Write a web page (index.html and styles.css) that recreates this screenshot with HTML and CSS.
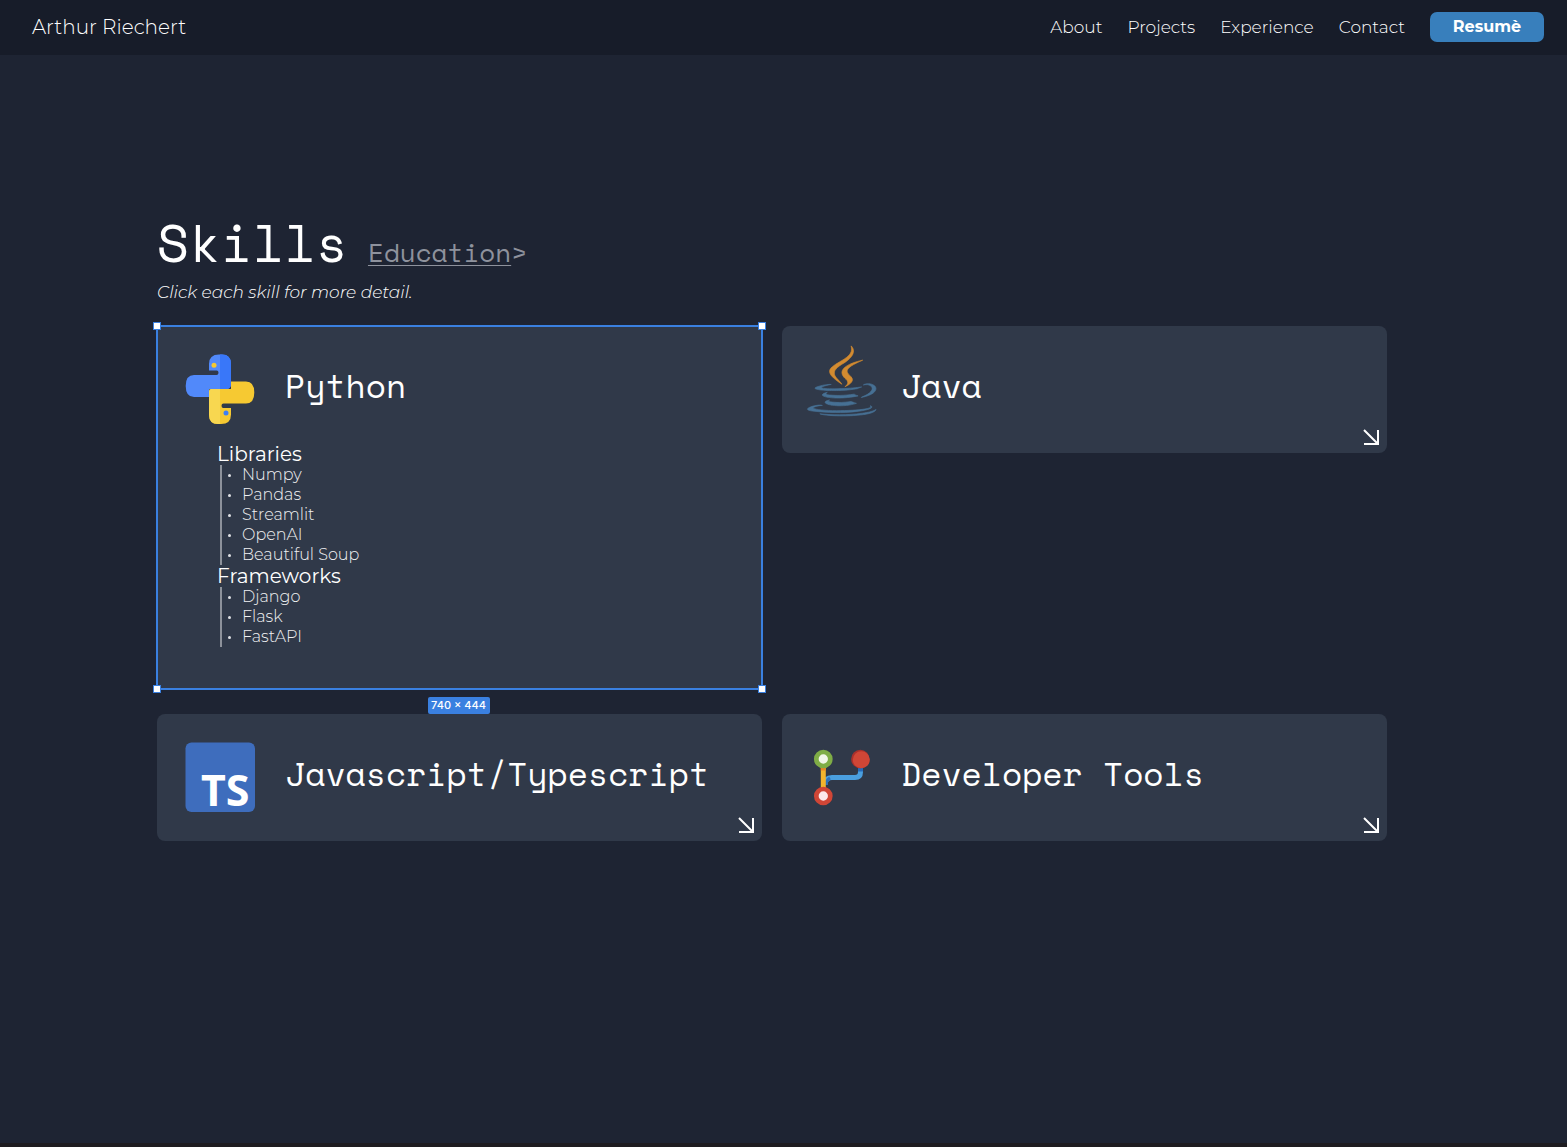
FILE: index.html
```html
<!DOCTYPE html>
<html lang="en">
<head>
<meta charset="utf-8">
<meta name="viewport" content="width=device-width, initial-scale=1">
<title>Arthur Riechert – Skills</title>
<link rel="stylesheet" href="styles.css">
</head>
<body>
<header class="site-header">
  <a class="brand" href="#">Arthur Riechert</a>
  <nav class="nav">
    <a href="#about">About</a>
    <a href="#projects">Projects</a>
    <a href="#experience">Experience</a>
    <a href="#contact">Contact</a>
    <button class="resume" type="button">Resumè</button>
  </nav>
</header>

<main class="page">
  <div class="heading">
    <h1>Skills</h1>
    <a class="switch" href="#education"><span>Education</span>&gt;</a>
  </div>
  <p class="hint">Click each skill for more detail.</p>

  <div class="skills">
    <section class="card card--open">
      <div class="card-head">
        <svg class="icon" viewBox="0 0 70 70" aria-hidden="true">
          <path fill="#5189fa" d="M24 10Q24 .5 34 .5H37Q46 .5 46 10V29.5Q46 35 41 35H24V43H9Q.7 43 .7 32Q.7 21 9 21H31.5Q33.5 21 33.5 18.7T31.5 16.5H24Z"/>
          <path fill="#3977f9" d="M35 .5H37Q46 .5 46 10V29.5Q46 35 41 35H35Z"/>
          <circle cx="29" cy="11.3" r="2.5" fill="#f5c831"/>
          <g transform="rotate(180 35 35.2)">
            <path fill="#f6c932" d="M24 10Q24 .5 34 .5H37Q46 .5 46 10V33Q46 35.4 43.5 35.4H24V43H9Q.7 43 .7 32Q.7 21 9 21H31.5Q33.5 21 33.5 18.7T31.5 16.5H24Z"/>
            <path fill="#f8d750" d="M35 .5H37Q46 .5 46 10V33Q46 35.4 43.5 35.4H35Z"/>
            <circle cx="29" cy="11.3" r="2.5" fill="#3f7ff5"/>
          </g>
        </svg>
        <h2>Python</h2>
      </div>
      <div class="details">
        <h3>Libraries</h3>
        <ul>
          <li>Numpy</li>
          <li>Pandas</li>
          <li>Streamlit</li>
          <li>OpenAI</li>
          <li>Beautiful Soup</li>
        </ul>
        <h3>Frameworks</h3>
        <ul>
          <li>Django</li>
          <li>Flask</li>
          <li>FastAPI</li>
        </ul>
      </div>
      <div class="selection">
        <i class="handle handle--tl"></i>
        <i class="handle handle--tr"></i>
        <i class="handle handle--bl"></i>
        <i class="handle handle--br"></i>
        <span class="size-tag">740 × 444</span>
      </div>
    </section>

    <section class="card card--right">
      <div class="card-head">
        <svg class="icon icon--tall" viewBox="16 0 94 157" preserveAspectRatio="none" aria-hidden="true">
          <g fill="#467094" stroke="#467094">
            <path d="M47.617 98.12s-4.767 2.774 3.397 3.71c9.892 1.13 14.947.968 25.845-1.092 0 0 2.871 1.795 6.873 3.351-24.439 10.47-55.308-.607-36.115-5.969zm-2.988-13.665s-5.348 3.959 2.823 4.805c10.567 1.091 18.91 1.18 33.354-1.6 0 0 1.993 2.025 5.132 3.131-29.542 8.64-62.446.68-41.309-6.336z"/>
            <path d="M102.123 108.229s3.529 2.91-3.888 5.159c-14.102 4.272-58.706 5.56-71.094.171-4.451-1.938 3.899-4.625 6.526-5.192 2.739-.593 4.303-.485 4.303-.485-4.953-3.487-32.013 6.85-13.743 9.815 49.821 8.076 90.817-3.637 77.896-9.468zM49.912 70.294s-22.686 5.389-8.033 7.348c6.188.828 18.518.638 30.011-.326 9.39-.789 18.813-2.474 18.813-2.474s-3.308 1.419-5.704 3.053c-23.042 6.061-67.544 3.238-54.731-2.958 10.832-5.239 19.644-4.643 19.644-4.643zM90.609 93.041c23.421-12.167 12.591-23.86 5.032-22.285-1.848.385-2.677.72-2.677.72s.688-1.079 2-1.543c14.953-5.255 26.451 15.503-4.823 23.725 0-.002.359-.327.468-.617z"/>
            <path d="M52.214 126.021c22.476 1.437 57-.8 57.817-11.436 0 0-1.571 4.032-18.577 7.231-19.186 3.612-42.854 3.191-56.887.874 0 .001 2.875 2.381 17.647 3.331z"/>
          </g>
          <g fill="#d38b30" stroke="#d38b30">
            <path d="M69.802 61.271c6.025 6.935-1.58 13.17-1.58 13.17s15.289-7.891 8.269-17.777c-6.559-9.215-11.587-13.792 15.634-29.58 0 .001-42.731 10.67-22.323 34.187z"/>
            <path d="M76.491 1.587s12.968 12.976-12.303 32.923c-20.266 16.006-4.621 25.13-.007 35.559-11.831-10.673-20.509-20.07-14.688-28.815 8.548-12.834 32.229-19.059 26.998-39.667z"/>
          </g>
        </svg>
        <h2>Java</h2>
      </div>
      <button class="expand" type="button" aria-label="Expand Java">
        <svg viewBox="0 0 16 16" aria-hidden="true"><path d="M1 1L14 14M15 1V15H1"/></svg>
      </button>
    </section>

    <section class="card">
      <div class="card-head">
        <svg class="icon" viewBox="0 0 70 70" aria-hidden="true">
          <rect x=".5" y=".5" width="69.5" height="69.5" rx="6" fill="#3e6dbd"/>
          <text class="ts-mark" x="16" y="64">TS</text>
        </svg>
        <h2>Javascript/Typescript</h2>
      </div>
      <button class="expand" type="button" aria-label="Expand Javascript/Typescript">
        <svg viewBox="0 0 16 16" aria-hidden="true"><path d="M1 1L14 14M15 1V15H1"/></svg>
      </button>
    </section>

    <section class="card card--right">
      <div class="card-head">
        <svg class="icon" viewBox="0 0 70 70" aria-hidden="true">
          <path d="M19 43Q19 35.5 26 35.5H49Q54.5 35.5 54.5 30V25" fill="none" stroke="#4a9fdf" stroke-width="5"/>
          <path d="M54.5 25V29.5" stroke="#2569b9" stroke-width="5"/>
          <path d="M20 43Q20 38.500 24 36" fill="none" stroke="#2c70ba" stroke-width="3"/>
          <path d="M17.3 24V48" stroke="#f3b42c" stroke-width="5"/>
          <path d="M17.3 24V28.5" stroke="#e98326" stroke-width="5"/>
          <circle cx="17.3" cy="17" r="7" fill="#f1f6e8" stroke="#7fad46" stroke-width="4.7"/>
          <circle cx="17.3" cy="54" r="7" fill="#fce8ea" stroke="#d04636" stroke-width="4.7"/>
          <circle cx="54.3" cy="17" r="9.2" fill="#a9302b"/>
          <circle cx="55.3" cy="17.7" r="8.5" fill="#d04636"/>
        </svg>
        <h2>Developer Tools</h2>
      </div>
      <button class="expand" type="button" aria-label="Expand Developer Tools">
        <svg viewBox="0 0 16 16" aria-hidden="true"><path d="M1 1L14 14M15 1V15H1"/></svg>
      </button>
    </section>
  </div>
</main>
</body>
</html>
```
FILE: styles.css
```css
* {
  box-sizing: border-box;
}

:root {
  --sans: Montserrat, Inter, "Open Sans", sans-serif;
  --mono: "Space Mono", "Liberation Mono", monospace;
  --select: #3a80e0;
}

body {
  margin: 0;
  min-height: 100vh;
  background: #1e2433;
  border-bottom: 4px solid #1e1c20;
  color: #fff;
  font-family: var(--sans);
  font-weight: 400;
}

a {
  color: inherit;
  text-decoration: none;
}

h1,
h2,
h3,
p,
ul {
  margin: 0;
  padding: 0;
  font-weight: 400;
}

button {
  border: 0;
  padding: 0;
  color: inherit;
  font-family: inherit;
  cursor: pointer;
}

.site-header {
  display: flex;
  align-items: center;
  justify-content: space-between;
  height: 55px;
  padding: 0 23px 2px 32px;
  background: #171c29;
}

.brand {
  font-size: 20px;
  font-weight: 300;
}

.nav {
  display: flex;
  align-items: center;
  gap: 25px;
  font-size: 17px;
  font-weight: 300;
}

.resume {
  width: 114px;
  height: 30px;
  border-radius: 7px;
  background: #387fbc;
  font-size: 16px;
  font-weight: 700;
}

.page {
  padding: 158px 180px 100px 157px;
}

.heading {
  display: flex;
  align-items: baseline;
  gap: 20px;
  font-family: var(--mono);
}

.heading h1 {
  font-size: 52px;
  line-height: 60px;
}

.switch {
  color: #8e929d;
  font-size: 26px;
}

.switch span {
  text-decoration: underline;
  text-decoration-thickness: 1px;
  text-underline-offset: 3px;
}

.hint {
  margin: 8px 0 23px;
  font-size: 17px;
  font-style: italic;
  font-weight: 300;
  line-height: 22px;
}

.skills {
  display: grid;
  grid-template-columns: 1fr 1fr;
  gap: 25px 20px;
  align-items: start;
}

.card {
  position: relative;
  padding-bottom: 2px;
  border-radius: 8px;
  background: #303949;
}

.card-head {
  display: flex;
  align-items: center;
  gap: 30px;
  height: 125px;
  padding-left: 28px;
}

.card--right .card-head {
  gap: 25px;
  padding-left: 24px;
}

.card h2 {
  margin-bottom: 6px;
  font-family: var(--mono);
  font-size: 33px;
  line-height: 40px;
}

.icon {
  flex: none;
  width: 70px;
  height: 70px;
  overflow: visible;
}

.icon--tall {
  height: 88px;
}

.ts-mark {
  fill: #fff;
  font: 700 43px "Noto Sans", sans-serif;
}

.expand {
  position: absolute;
  right: 8px;
  bottom: 8px;
  width: 16px;
  height: 16px;
  background: none;
}

.expand svg {
  display: block;
  fill: none;
  stroke: #fff;
  stroke-width: 2;
}

.details {
  margin-top: -8px;
  padding: 0 60px 40px;
}

.details h3 {
  font-size: 20px;
  line-height: 22px;
}

.details ul {
  margin-left: 3px;
  padding-left: 6px;
  border-left: 2px solid #8d929b;
  list-style: none;
  color: #f0f1f3;
  font-size: 16px;
  font-weight: 300;
  line-height: 20px;
}

.details li {
  display: flex;
  align-items: center;
  gap: 11px;
}

.details li::before {
  content: "";
  width: 3px;
  height: 3px;
  border-radius: 50%;
  background: #dfe1e5;
}

.selection {
  position: absolute;
  inset: -1px;
  border: 2px solid var(--select);
  pointer-events: none;
}

.handle {
  position: absolute;
  width: 8px;
  height: 8px;
  border: 1px solid var(--select);
  background: #fff;
}

.handle--tl {
  top: -5px;
  left: -5px;
}

.handle--tr {
  top: -5px;
  right: -5px;
}

.handle--bl {
  bottom: -5px;
  left: -5px;
}

.handle--br {
  right: -5px;
  bottom: -5px;
}

.size-tag {
  position: absolute;
  top: calc(100% + 9px);
  left: 50%;
  width: 62px;
  margin-left: -32px;
  border-radius: 2px;
  background: var(--select);
  font: 500 11px/17px Inter, sans-serif;
  text-align: center;
}
```
